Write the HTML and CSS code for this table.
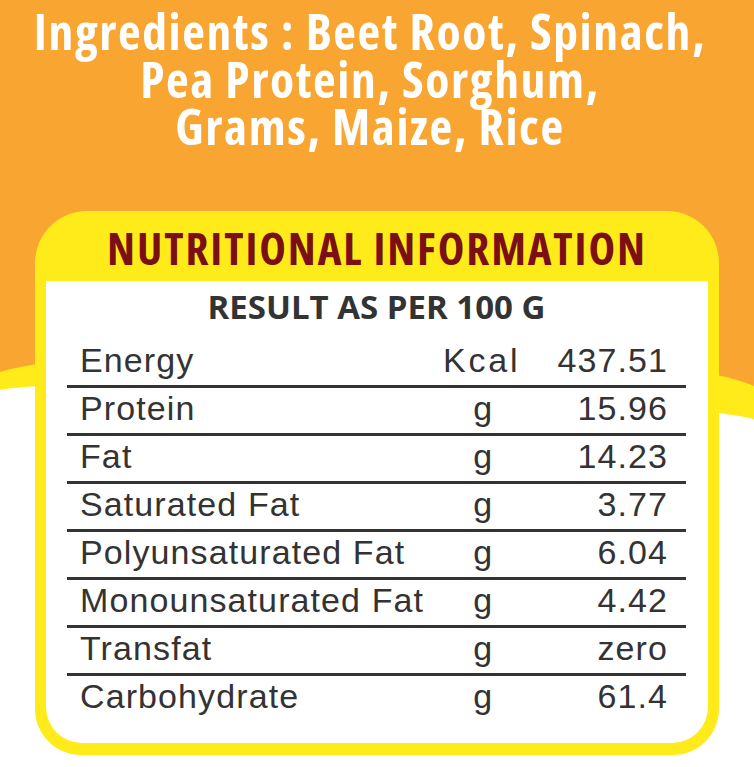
FILE: index.html
```html
<!DOCTYPE html>
<html lang="en">
<head>
<meta charset="utf-8">
<title>Nutritional Information</title>
<link rel="stylesheet" href="styles.css">
</head>
<body>
<div class="page">
  <svg class="backdrop" viewBox="0 0 754 767" preserveAspectRatio="none" aria-hidden="true">
    <rect x="0" y="0" width="754" height="767" fill="#F8A532"/>
    <path d="M0,372 C100,340 650,340 754,386 L754,767 L0,767 Z" fill="#FFEB1A"/>
    <path d="M0,390 C100,372 650,395 754,419 L754,767 L0,767 Z" fill="#FFFFFF"/>
  </svg>
  <div class="content">
    <h1 class="ingredients"><span class="line">Ingredients : Beet Root, Spinach,</span><span class="line">Pea Protein, Sorghum,</span><span class="line">Grams, Maize, Rice</span></h1>
    <section class="card">
      <h2 class="card-title">NUTRITIONAL INFORMATION</h2>
      <div class="card-body">
        <div class="per">RESULT AS PER 100 G</div>
        <div class="table">
          <div class="row"><span class="label">Energy</span><span class="unit unit-wide">Kcal</span><span class="value">437.51</span></div>
          <div class="row"><span class="label">Protein</span><span class="unit">g</span><span class="value">15.96</span></div>
          <div class="row"><span class="label">Fat</span><span class="unit">g</span><span class="value">14.23</span></div>
          <div class="row"><span class="label">Saturated Fat</span><span class="unit">g</span><span class="value">3.77</span></div>
          <div class="row"><span class="label">Polyunsaturated Fat</span><span class="unit">g</span><span class="value">6.04</span></div>
          <div class="row"><span class="label">Monounsaturated Fat</span><span class="unit">g</span><span class="value">4.42</span></div>
          <div class="row"><span class="label">Transfat</span><span class="unit">g</span><span class="value">zero</span></div>
          <div class="row"><span class="label">Carbohydrate</span><span class="unit">g</span><span class="value">61.4</span></div>
        </div>
      </div>
    </section>
  </div>
</div>
</body>
</html>
```
FILE: styles.css
```css
html, body {
  margin: 0;
  padding: 0;
}
body {
  width: 754px;
  height: 767px;
  overflow: hidden;
  background: #ffffff;
}
.page {
  position: relative;
  width: 754px;
  height: 767px;
}
.backdrop {
  position: absolute;
  left: 0;
  top: 0;
  width: 754px;
  height: 767px;
  display: block;
}
.content {
  position: relative;
  display: flex;
  flex-direction: column;
  align-items: center;
}
.ingredients {
  margin: 0;
  padding: 8px 14px 0 0;
  width: 754px;
  box-sizing: border-box;
  display: flex;
  flex-direction: column;
  align-items: center;
  color: #ffffff;
  font-family: "Open Sans", "Noto Sans", sans-serif;
  font-stretch: 75%;
  font-weight: 700;
  font-size: 49.5px;
  line-height: 47.5px;
}
.line {
  display: block;
  white-space: nowrap;
  letter-spacing: 1.6px;
}
.card {
  margin-top: 60px;
  width: 684px;
  box-sizing: border-box;
  background: #FFEB1A;
  border-radius: 52px 52px 46px 46px;
  padding: 0 11px 12px;
  display: flex;
  flex-direction: column;
}
.card-title {
  margin: 0;
  padding-top: 6px;
  height: 70px;
  box-sizing: border-box;
  line-height: 62px;
  text-align: center;
  color: #7A1016;
  font-family: "Open Sans", "Noto Sans", sans-serif;
  font-stretch: 75%;
  font-weight: 700;
  font-size: 45px;
  letter-spacing: 1.9px;
  white-space: nowrap;
}
.card-body {
  background: #ffffff;
  border-radius: 0 0 36px 36px;
  padding: 6px 22px 22px 21px;
  display: flex;
  flex-direction: column;
}
.per {
  text-align: center;
  color: #333333;
  font-family: "Open Sans", "Noto Sans", sans-serif;
  font-stretch: 92%;
  font-weight: 700;
  font-size: 33px;
  line-height: 40px;
  margin-bottom: 13px;
}
.table {
  display: flex;
  flex-direction: column;
}
.row {
  display: grid;
  grid-template-columns: 1fr 80px 145px;
  height: 48px;
  box-sizing: border-box;
  border-bottom: 3px solid #333333;
  padding: 0 18px 5px 13px;
  color: #333333;
  font-family: "Liberation Sans", Arial, sans-serif;
  font-size: 34px;
  line-height: 40px;
  letter-spacing: 1.1px;
}
.row:last-child {
  border-bottom: none;
  height: 45px;
}
.label {
  text-align: left;
  white-space: nowrap;
}
.unit {
  text-align: center;
  letter-spacing: 0.4px;
}
.unit-wide {
  letter-spacing: 2.8px;
  padding-right: 4px;
  white-space: nowrap;
}
.value {
  text-align: right;
}
```
